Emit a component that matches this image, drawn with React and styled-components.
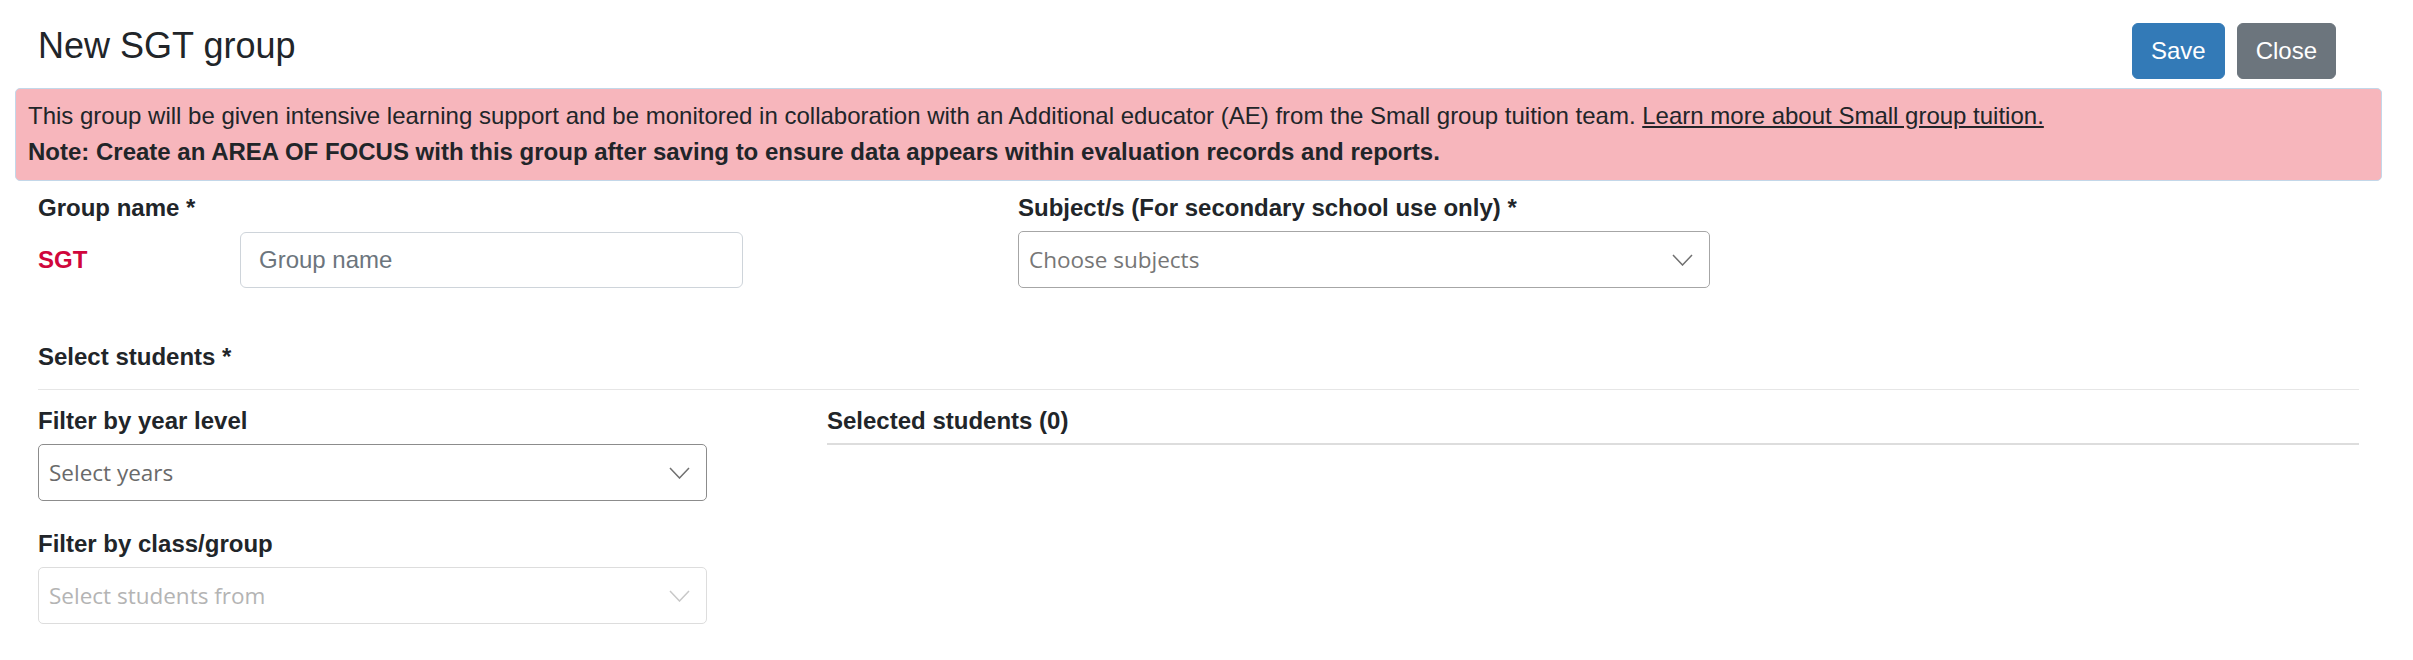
import React from 'react';
import styled, { createGlobalStyle } from 'styled-components';

const GlobalStyle = createGlobalStyle`
  body {
    margin: 0;
    background: #fff;
    font-family: "Liberation Sans", Arial, sans-serif;
    color: #212529;
  }
`;

const Page = styled.div`
  padding: 0 31px 40px 15px;
`;

const Header = styled.div`
  display: flex;
  justify-content: space-between;
  align-items: flex-start;
  padding: 23px 46px 0 23px;
  margin-bottom: 9px;
`;

const Title = styled.h1`
  margin: 0;
  font-size: 36px;
  font-weight: 400;
  line-height: 43px;
  margin-top: 1px;
`;

const Actions = styled.div`
  display: flex;
  gap: 12px;
`;

const Button = styled.button`
  height: 56px;
  padding: 0 18px;
  font-family: "Liberation Sans", Arial, sans-serif;
  font-size: 24px;
  color: #fff;
  border-radius: 6px;
  border: 1px solid ${p => (p.$variant === 'primary' ? '#337ab7' : '#6c757d')};
  background: ${p => (p.$variant === 'primary' ? '#337ab7' : '#6c757d')};
  cursor: pointer;
`;

const Alert = styled.div`
  background: #f7b6bc;
  border: 1px solid #c3d7e9;
  border-radius: 5px;
  padding: 9px 12px 10px;
  font-size: 24px;
  line-height: 36px;
  color: #212529;
`;

const AlertLine = styled.div`
  font-weight: ${p => (p.$bold ? 700 : 400)};
  white-space: nowrap;
`;

const AlertLink = styled.a`
  color: inherit;
  text-decoration: underline;
`;

const Form = styled.div`
  padding: 0 23px;
`;

const TopRow = styled.div`
  display: grid;
  grid-template-columns: 980px 692px;
  margin-top: 9px;
`;

const Field = styled.div`
  display: flex;
  flex-direction: column;
`;

const Label = styled.div`
  font-size: 24px;
  font-weight: 700;
  line-height: 36px;
  margin-top: ${p => p.$mt || 0}px;
`;

const NameRow = styled.div`
  display: flex;
  align-items: center;
  margin-top: 6px;
`;

const Prefix = styled.div`
  width: 202px;
  font-size: 24px;
  font-weight: 700;
  color: #d0063c;
`;

const TextInput = styled.input`
  box-sizing: border-box;
  width: 503px;
  height: 56px;
  padding: 0 18px;
  font-family: "Liberation Sans", Arial, sans-serif;
  font-size: 24px;
  color: #495057;
  border: 1px solid #ced4da;
  border-radius: 6px;
  outline: none;
  &::placeholder {
    color: #6c757d;
  }
`;

const SelectBox = styled.div`
  box-sizing: border-box;
  display: flex;
  align-items: center;
  justify-content: space-between;
  width: ${p => p.$width}px;
  height: 57px;
  margin-top: 5px;
  padding: 0 16px 0 10px;
  border: 1px solid ${p => (p.$disabled ? '#dddddd' : p.$border || '#999999')};
  border-radius: 5px;
  background: #fff;
  font-family: "Open Sans", "Noto Sans", sans-serif;
  font-size: 22.5px;
  color: ${p => (p.$disabled ? '#b4b4b4' : p.$text || '#707070')};
`;

const Chevron = styled.svg`
  width: 21px;
  height: 12px;
  flex: none;
`;

const Divider = styled.hr`
  margin: 14px 0 0;
  border: 0;
  border-top: 1px solid #e6e6e6;
`;

const StudentsRow = styled.div`
  display: grid;
  grid-template-columns: 744px 1fr;
  column-gap: 45px;
  margin-top: 13px;
`;

const SelectedRule = styled.div`
  height: 2px;
  margin-top: 4px;
  background: #dddddd;
`;

function Select({ placeholder, width, disabled, border, text }) {
  return (
    <SelectBox $width={width} $disabled={disabled} $border={border} $text={text}>
      <span>{placeholder}</span>
      <Chevron viewBox="0 0 21 12">
        <polyline
          points="1,1 10.5,11 20,1"
          fill="none"
          stroke={disabled ? '#c8c8c8' : '#707070'}
          strokeWidth="1.5"
        />
      </Chevron>
    </SelectBox>
  );
}

export default function App() {
  return (
    <Page>
      <GlobalStyle />
      <Header>
        <Title>New SGT group</Title>
        <Actions>
          <Button $variant="primary">Save</Button>
          <Button $variant="secondary">Close</Button>
        </Actions>
      </Header>

      <Alert>
        <AlertLine>
          This group will be given intensive learning support and be monitored in collaboration with an
          Additional educator (AE) from the Small group tuition team.{' '}
          <AlertLink href="#">Learn more about Small group tuition.</AlertLink>
        </AlertLine>
        <AlertLine $bold>
          Note: Create an AREA OF FOCUS with this group after saving to ensure data appears within evaluation
          records and reports.
        </AlertLine>
      </Alert>

      <Form>
        <TopRow>
          <Field>
            <Label>Group name *</Label>
            <NameRow>
              <Prefix>SGT</Prefix>
              <TextInput placeholder="Group name" />
            </NameRow>
          </Field>
          <Field>
            <Label>Subject/s (For secondary school use only) *</Label>
            <Select placeholder="Choose subjects" width={692} border="#a6a6a6" text="#767676" />
          </Field>
        </TopRow>

        <Label $mt={51}>Select students *</Label>
        <Divider />

        <StudentsRow>
          <Field>
            <Label>Filter by year level</Label>
            <Select placeholder="Select years" width={669} border="#8c8c8c" text="#6a6a6a" />
            <Label $mt={25}>Filter by class/group</Label>
            <Select placeholder="Select students from" width={669} disabled />
          </Field>
          <Field>
            <Label>Selected students (0)</Label>
            <SelectedRule />
          </Field>
        </StudentsRow>
      </Form>
    </Page>
  );
}
